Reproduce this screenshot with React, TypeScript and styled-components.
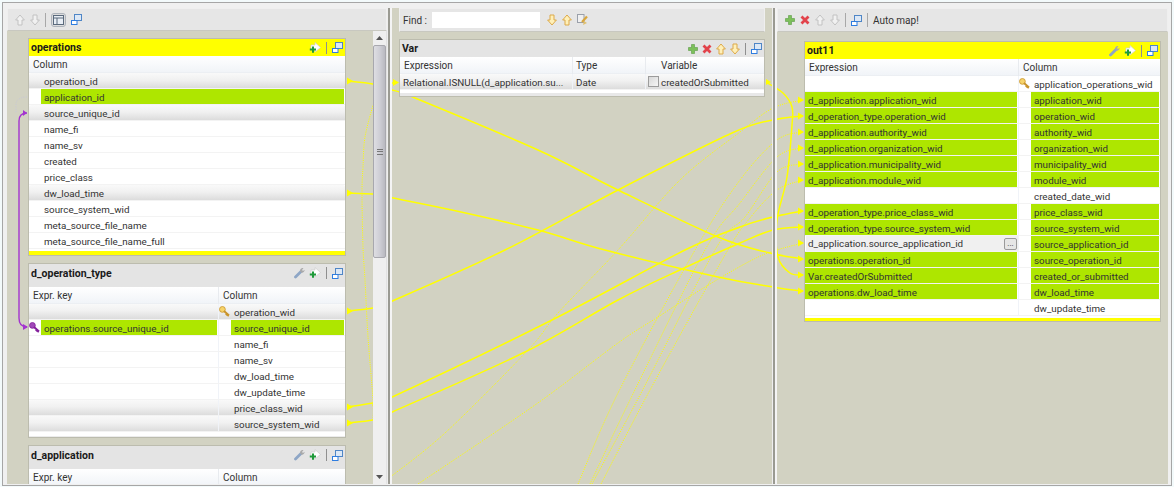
import React from "react";
import styled, { createGlobalStyle } from "styled-components";

const GlobalStyle = createGlobalStyle`
  html, body { margin: 0; padding: 0; background: #f3fafb; overflow: hidden; }
  * { box-sizing: border-box; }
  body { font-family: Roboto, "Open Sans", "Liberation Sans", sans-serif; font-size: 10px; color: #333; }
`;

const CANVAS = "#d2d2c2";
const GREEN = "#aee600";

const Frame = styled.div`
  display: flex;
  width: 1170px;
  height: 484px;
  margin: 2px 0 0 2px;
  padding: 5px 2px 1px 4px;
  background: #f0f0f0;
  border: 1px solid #a6a6a6;
`;
const LeftPanel = styled.section`
  width: 380px;
  display: flex;
  flex-direction: column;
`;
const CenterPanel = styled.section`
  position: relative;
  width: 380px;
  padding: 0 7px;
  background: ${CANVAS};
  overflow: hidden;
`;
const RightPanel = styled.section`
  position: relative;
  width: 391px;
  background: ${CANVAS};
  overflow: hidden;
`;
const Sash = styled.div`
  width: 5px;
  background: linear-gradient(90deg, #eee 0 1px, #9a9a92 1px 3px, #f4f4f4 3px 5px);
`;
const Toolbar = styled.div<{ $h?: number; $pad?: number }>`
  position: relative;
  z-index: 1;
  display: flex;
  align-items: center;
  height: ${(p) => p.$h ?? 24}px;
  padding-left: ${(p) => p.$pad ?? 7}px;
  background: #e6e6e6;
  border: 1px solid #efefef;
  border-bottom-color: #c8c8c0;
  gap: 5px;
`;
const ToolSep = styled.span`
  width: 1px;
  height: 14px;
  background: #a8a8a8;
`;
const Pressed = styled.span`
  display: flex;
  align-items: center;
  justify-content: center;
  width: 15px;
  height: 14px;
  border: 1px solid #aeb4bc;
  border-radius: 3px;
  background: #dcdcdc;
`;
const ToolLabel = styled.span`
  margin-top: 2px;
  font-size: 10px;
  line-height: 16px;
`;
const FindInput = styled.input`
  width: 108px;
  height: 16px;
  margin: 0 2px 0 0;
  border: 0;
  background: #fff;
`;
const LeftBody = styled.div`
  flex: 1;
  display: flex;
  min-height: 0;
`;
const ScrollArea = styled.div`
  position: relative;
  width: 366px;
  padding: 7px 0 0 21px;
  background: ${CANVAS};
  overflow: hidden;
  display: flex;
  flex-direction: column;
  gap: 7px;
`;
const Scrollbar = styled.div`
  width: 14px;
  display: flex;
  flex-direction: column;
  align-items: center;
  background: #efefef;
  border-right: 1px solid #e2e2e2;
`;
const ScrollArrow = styled.span`
  height: 14px;
  display: flex;
  align-items: center;
  justify-content: center;
`;
const Thumb = styled.div`
  width: 13px;
  height: 213px;
  display: flex;
  align-items: center;
  justify-content: center;
  background: linear-gradient(90deg, #dedee2, #cfcfd6 50%, #b9b9c0);
  border: 1px solid #a8a8ae;
  border-radius: 2px;
`;
const ScrollSpacer = styled.div`
  flex: 1;
`;
const Grip = styled.span`
  width: 6px;
  height: 6px;
  border-top: 1px solid #777;
  border-bottom: 1px solid #777;
  background: linear-gradient(#777, #777) center / 100% 1px no-repeat;
`;
const Card = styled.div<{ $w: number; $mt?: number; $ml?: number }>`
  position: relative;
  z-index: 1;
  flex: none;
  width: ${(p) => p.$w}px;
  margin-top: ${(p) => p.$mt ?? 0}px;
  margin-left: ${(p) => p.$ml ?? 0}px;
  background: #fff;
  border: 1px solid #bcbcae;
`;
const CardHead = styled.div<{ $active?: boolean; $tall?: boolean }>`
  display: flex;
  align-items: center;
  height: ${(p) => (p.$tall ? 23 : 17)}px;
  padding: ${(p) => (p.$tall ? "0 0 5px 2px" : "0 0 0 2px")};
  background: ${(p) => (p.$active ? "#ffff00" : "#e4e4e4")};
`;
const CardTitle = styled.span`
  flex: 1;
  font-size: 10.5px;
  font-weight: 700;
  color: #1a1a1a;
`;
const Actions = styled.span`
  display: flex;
  align-items: center;
  gap: 4px;
  padding-right: 2px;
`;
const HeadSep = styled.span`
  width: 1px;
  height: 12px;
  margin: 0 1px;
  background: #8f8f8f;
`;
const ColHeader = styled.div<{ $cols: string }>`
  display: grid;
  grid-template-columns: ${(p) => p.$cols};
  height: 17px;
  background: linear-gradient(#fff, #f1f4f8);
  border-bottom: 1px solid #eceff3;
`;
const ColName = styled.span<{ $pad?: number }>`
  padding-left: ${(p) => p.$pad ?? 4}px;
  line-height: 18px;
  font-size: 10px;
  border-right: 1px solid #e8ebef;
  &:last-child { border-right: 0; }
`;
const Row = styled.div<{ $cols: string; $linked?: boolean }>`
  display: grid;
  grid-template-columns: ${(p) => p.$cols};
  height: 16px;
  padding-right: 1px;
  background: ${(p) =>
    p.$linked ? "linear-gradient(#f9f9f9 0, #f1f1f1 45%, #dcdcdc 100%)" : "#fff"};
  border-bottom: 1px solid #f3f3f3;
  ${(p) => p.$linked && "border-radius: 2px 2px 0 0;"}
`;
const Cell = styled.div`
  position: relative;
  display: flex;
  min-width: 0;
  height: 15px;
  border-right: 1px solid #f0f3f8;
  &:last-child { border-right: 0; }
`;
const Slot = styled.span<{ $w?: number }>`
  flex: none;
  display: flex;
  align-items: center;
  width: ${(p) => p.$w ?? 12}px;
`;
const Value = styled.span<{ $green?: boolean; $gapRight?: number }>`
  flex: 1;
  min-width: 0;
  margin-right: ${(p) => p.$gapRight ?? 0}px;
  padding-left: 3px;
  line-height: 17px;
  font-size: 9.8px;
  white-space: nowrap;
  overflow: hidden;
  background: ${(p) => (p.$green ? GREEN : "transparent")};
`;
const Editor = styled.span`
  flex: 1;
  display: flex;
  align-items: center;
  justify-content: space-between;
  margin-left: 1px;
  padding: 0 1px 0 2px;
  font-size: 9.8px;
  background: #f0f0f0;
`;
const DotsButton = styled.span`
  width: 13px;
  height: 12px;
  line-height: 9px;
  text-align: center;
  font-size: 8px;
  background: #e6e6e6;
  border: 1px solid #9a9a9a;
  border-radius: 2px;
`;
const Check = styled.span`
  width: 11px;
  height: 11px;
  margin: 2px -1px 0 2px;
  border: 1px solid #9c9c9c;
  background: linear-gradient(135deg, #d8d8d8, #f6f6f6);
`;
const CardFoot = styled.div<{ $h: number; $strip?: string; $stripH?: number }>`
  height: ${(p) => p.$h}px;
  background: linear-gradient(
    transparent calc(100% - ${(p) => p.$stripH ?? 0}px),
    ${(p) => p.$strip ?? "transparent"} 0
  );
`;
const Wrap = styled.svg`
  position: absolute;
  left: 0;
  top: 0;
  pointer-events: none;
`;

/* ---------- icons ---------- */
const Arrow = ({ dir, color, stroke }: { dir: "up" | "down"; color: string; stroke: string }) => (
  <svg width="10" height="12" viewBox="0 0 10 12" style={{ transform: dir === "down" ? "scaleY(-1)" : undefined }}>
    <path d="M5 1 L9.4 6 H7 V11 H3 V6 H.6 Z" fill={color} stroke={stroke} strokeWidth="1" strokeLinejoin="round" />
  </svg>
);
const GrayUp = () => <Arrow dir="up" color="#f1f1f1" stroke="#c2c2c2" />;
const GrayDown = () => <Arrow dir="down" color="#f1f1f1" stroke="#c2c2c2" />;
const GoldUp = () => <Arrow dir="up" color="#fff0b8" stroke="#dca94a" />;
const GoldDown = () => <Arrow dir="down" color="#fff0b8" stroke="#dca94a" />;
const Win = () => (
  <svg width="11" height="11" viewBox="0 0 11 11">
    <rect x="3.5" y=".5" width="7" height="6" fill="#dce8f6" stroke="#4f86c6" />
    <rect x=".5" y="6.5" width="5.5" height="4" fill="#fff" stroke="#2f7de0" />
  </svg>
);
const TableIco = () => (
  <svg width="11" height="10" viewBox="0 0 11 10">
    <rect x=".5" y=".5" width="10" height="9" fill="#e8eef5" stroke="#5a6a7c" />
    <path d="M.5 3 H10.5 M4 3 V9.5" stroke="#5a6a7c" />
  </svg>
);
const Plus = () => (
  <svg width="10" height="10" viewBox="0 0 10 10">
    <path d="M3.5 .5 H6.5 V3.5 H9.5 V6.5 H6.5 V9.5 H3.5 V6.5 H.5 V3.5 H3.5 Z" fill="#7cc05a" stroke="#5b9a44" strokeWidth=".6" />
  </svg>
);
const Cross = () => (
  <svg width="10" height="10" viewBox="0 0 10 10">
    <path d="M1.5 1.5 L8.5 8.5 M8.5 1.5 L1.5 8.5" stroke="#e2434b" strokeWidth="2.8" />
  </svg>
);
const Wrench = () => (
  <svg width="11" height="12" viewBox="0 0 11 11">
    <path d="M1.5 9.5 L7 4" stroke="#8ea6c6" strokeWidth="2.8" strokeLinecap="round" />
    <path d="M6.2 3.8 A2.6 2.6 0 0 1 9.5 .6 L8 2.4 L9 3.6 L10.6 2.2 A2.6 2.6 0 0 1 7.2 5 Z" fill="#a9a9a9" />
  </svg>
);
const AddArrow = () => (
  <svg width="12" height="12" viewBox="0 0 12 12">
    <path d="M6 .5 L11.5 5.5 L6 10 V7.5 H2 V3 H6 Z" fill="#fff" stroke="#cfcfcf" strokeWidth=".7" />
    <path d="M3 4.5 H5 V6.5 H7 V8.5 H5 V10.8 H3 V8.5 H.8 V6.5 H3 Z" fill="#1f9a3a" />
  </svg>
);
const Key = ({ color, edge }: { color: string; edge: string }) => (
  <svg width="11" height="11" viewBox="0 0 11 11">
    <circle cx="3.4" cy="3.4" r="2.9" fill={color} stroke={edge} strokeWidth=".8" />
    <path d="M5 5 L10 9.6 M8 7.8 L6.8 9 M9.4 9 L8.4 10.2" stroke={edge} strokeWidth="2" />
  </svg>
);
const GoldKey = () => <Key color="#f6d36a" edge="#c9942c" />;
const PurpleKey = () => <Key color="#a048b8" edge="#84209c" />;
const FindOpts = () => (
  <svg width="12" height="12" viewBox="0 0 12 12">
    <rect x=".5" y=".5" width="6.5" height="8" fill="#f0f0f0" stroke="#9aa0aa" />
    <path d="M5 8 L10 2.5" stroke="#d9a63c" strokeWidth="2.2" />
    <path d="M6 11 L7 7 L10 9 Z" fill="#e0c070" />
  </svg>
);
const TinyTri = ({ down }: { down?: boolean }) => (
  <svg width="7" height="4" viewBox="0 0 7 4">
    <path d={down ? "M0 0 H7 L3.5 4 Z" : "M0 4 H7 L3.5 0 Z"} fill="#555" />
  </svg>
);

/* ---------- connection wires (page coordinates) ---------- */
type P = [number, number];
const smooth = (pts: P[]) => {
  let d = `M${pts[0][0]} ${pts[0][1]}`;
  for (let i = 0; i < pts.length - 1; i++) {
    const a = pts[Math.max(i - 1, 0)];
    const b = pts[i];
    const c = pts[i + 1];
    const e = pts[Math.min(i + 2, pts.length - 1)];
    d += ` C${b[0] + (c[0] - a[0]) / 6} ${b[1] + (c[1] - a[1]) / 6} ${c[0] - (e[0] - b[0]) / 6} ${c[1] - (e[1] - b[1]) / 6} ${c[0]} ${c[1]}`;
  }
  return d;
};
const solid: P[][] = [
  [[347, 81], [373, 84], [392, 90], [415, 98], [538, 150], [618, 190], [718, 237], [770, 253], [803, 259]],
  [[347, 193], [373, 194], [388, 197], [452, 210], [538, 230], [605, 250], [718, 277], [773, 287], [803, 291]],
  [[347, 407], [373, 403], [390, 398], [552, 320], [685, 250], [740, 227], [773, 217], [803, 211]],
  [[347, 423], [373, 420], [390, 413], [525, 352], [618, 300], [682, 269], [740, 243], [773, 230], [803, 227]],
  [[347, 311], [373, 308], [390, 302], [505, 250], [618, 190], [732, 133], [773, 120], [803, 116]],
  [[766, 82], [783, 93], [792, 107], [792, 125], [787, 177], [777, 220], [778, 257], [790, 273], [803, 275]],
  [[390, 83], [396, 83]],
];
const dotted: P[][] = [
  [[373, 420], [373, 400], [368, 337], [365, 280], [363, 247], [362, 193], [363, 167], [365, 137], [373, 105]],
  [[385, 481], [445, 433], [528, 350], [558, 313], [618, 250], [680, 180], [740, 132], [773, 108], [803, 100]],
  [[418, 484], [535, 405], [618, 343], [658, 317], [705, 287], [752, 260], [777, 250], [803, 243]],
  [[578, 484], [618, 393], [695, 250], [740, 180], [777, 140], [803, 132]],
  [[590, 484], [630, 400], [705, 250], [740, 203], [777, 157], [803, 148]],
  [[592, 484], [640, 395], [715, 250], [745, 217], [777, 172], [803, 164]],
  [[601, 484], [650, 390], [725, 255], [750, 218], [777, 190], [803, 180]],
];
const sources = [81, 193, 311, 407, 423];
const targets = [100, 116, 132, 148, 164, 180, 211, 227, 243, 259, 275, 291];

const Wires = ({ x, y, w, h }: { x: number; y: number; w: number; h: number }) => (
  <Wrap width={w} height={h} viewBox={`${x} ${y} ${w} ${h}`}>
    {solid.map((p, i) => (
      <path key={i} d={smooth(p)} fill="none" stroke="#ffff00" strokeWidth="1.5" />
    ))}
    {dotted.map((p, i) => (
      <path key={i} d={smooth(p)} fill="none" stroke="#ffff00" strokeWidth="1" strokeDasharray="1 1.2" />
    ))}
    {sources.map((t) => (
      <polygon key={t} points={`347,${t - 3.5} 353,${t} 347,${t + 3.5}`} fill="#ffff00" />
    ))}
    <polygon points="393,79 399,82.5 393,86" fill="#ffff00" />
    <polygon points="766,79 771,82 766,85" fill="#ffff00" />
    {targets.map((t) => (
      <polygon key={t} points={`798,${t - 3.5} 804,${t} 798,${t + 3.5}`} fill="#ffff00" />
    ))}
    <path d="M27 113 Q19 113 19 121 V318 Q19 327 27 327" fill="none" stroke="#a334cf" strokeWidth="1.4" />
    <polygon points="23,110 27,113 23,116" fill="#a334cf" />
    <polygon points="23,324 28,327 23,330" fill="#a334cf" />
    <path d="M27 97 Q16 97 16 105 V113" fill="none" stroke="#c8c8d8" strokeWidth="1" strokeDasharray="1 1.4" />
  </Wrap>
);

/* ---------- data ---------- */
const ONE = "1fr";
const TWO = "190px 1fr";
const OUT = "214px 1fr";
const VAR = "173px 73px 1fr";

const opRows: [string, boolean, boolean][] = [
  ["operation_id", true, false],
  ["application_id", false, true],
  ["source_unique_id", true, false],
  ["name_fi", false, false],
  ["name_sv", false, false],
  ["created", false, false],
  ["price_class", false, false],
  ["dw_load_time", true, false],
  ["source_system_wid", false, false],
  ["meta_source_file_name", false, false],
  ["meta_source_file_name_full", false, false],
];
const typeRows: { col: string; linked?: boolean; gold?: boolean; expr?: string }[] = [
  { col: "operation_wid", linked: true, gold: true },
  { col: "source_unique_id", expr: "operations.source_unique_id" },
  { col: "name_fi" },
  { col: "name_sv" },
  { col: "dw_load_time" },
  { col: "dw_update_time" },
  { col: "price_class_wid", linked: true },
  { col: "source_system_wid", linked: true },
];
const outRows: { expr?: string; col: string; gold?: boolean; editing?: boolean }[] = [
  { col: "application_operations_wid", gold: true },
  { expr: "d_application.application_wid", col: "application_wid" },
  { expr: "d_operation_type.operation_wid", col: "operation_wid" },
  { expr: "d_application.authority_wid", col: "authority_wid" },
  { expr: "d_application.organization_wid", col: "organization_wid" },
  { expr: "d_application.municipality_wid", col: "municipality_wid" },
  { expr: "d_application.module_wid", col: "module_wid" },
  { col: "created_date_wid" },
  { expr: "d_operation_type.price_class_wid", col: "price_class_wid" },
  { expr: "d_operation_type.source_system_wid", col: "source_system_wid" },
  { expr: "d_application.source_application_id", col: "source_application_id", editing: true },
  { expr: "operations.operation_id", col: "source_operation_id" },
  { expr: "Var.createdOrSubmitted", col: "created_or_submitted" },
  { expr: "operations.dw_load_time", col: "dw_load_time" },
  { col: "dw_update_time" },
];

const LookupActions = () => (
  <Actions>
    <Wrench />
    <AddArrow />
    <HeadSep />
    <Win />
  </Actions>
);

export default function App() {
  return (
    <>
      <GlobalStyle />
      <Frame>
        <LeftPanel>
          <Toolbar $h={23}>
            <GrayUp />
            <GrayDown />
            <ToolSep />
            <Pressed>
              <TableIco />
            </Pressed>
            <Win />
          </Toolbar>
          <LeftBody>
            <ScrollArea>
              <Wires x={7} y={31} w={366} h={453} />
              <Card $w={318}>
                <CardHead $active>
                  <CardTitle>operations</CardTitle>
                  <Actions>
                    <AddArrow />
                    <HeadSep />
                    <Win />
                  </Actions>
                </CardHead>
                <ColHeader $cols={ONE}>
                  <ColName>Column</ColName>
                </ColHeader>
                {opRows.map(([name, linked, green]) => (
                  <Row key={name} $cols={ONE} $linked={linked}>
                    <Cell>
                      <Slot />
                      <Value $green={green}>{name}</Value>
                    </Cell>
                  </Row>
                ))}
                <CardFoot $h={6} $strip="#ffff00" $stripH={4} />
              </Card>
              <Card $w={318}>
                <CardHead $tall>
                  <CardTitle>d_operation_type</CardTitle>
                  <LookupActions />
                </CardHead>
                <ColHeader $cols={TWO}>
                  <ColName>Expr. key</ColName>
                  <ColName>Column</ColName>
                </ColHeader>
                {typeRows.map((r) => (
                  <Row key={r.col} $cols={TWO} $linked={r.linked}>
                    <Cell>
                      <Slot>{r.expr && <PurpleKey />}</Slot>
                      <Value $green={!!r.expr} $gapRight={1}>
                        {r.expr}
                      </Value>
                    </Cell>
                    <Cell>
                      <Slot>{r.gold && <GoldKey />}</Slot>
                      <Value $green={!!r.expr}>{r.col}</Value>
                    </Cell>
                  </Row>
                ))}
                <CardFoot $h={5} $strip="#ececec" $stripH={1} />
              </Card>
              <Card $w={318}>
                <CardHead $tall>
                  <CardTitle>d_application</CardTitle>
                  <LookupActions />
                </CardHead>
                <ColHeader $cols={TWO}>
                  <ColName>Expr. key</ColName>
                  <ColName>Column</ColName>
                </ColHeader>
              </Card>
            </ScrollArea>
            <Scrollbar>
              <ScrollArrow>
                <TinyTri />
              </ScrollArrow>
              <Thumb>
                <Grip />
              </Thumb>
              <ScrollSpacer />
              <ScrollArrow>
                <TinyTri down />
              </ScrollArrow>
            </Scrollbar>
          </LeftBody>
        </LeftPanel>
        <Sash />
        <CenterPanel>
          <Wires x={392} y={8} w={380} h={477} />
          <Toolbar $pad={3}>
            <ToolLabel>Find :</ToolLabel>
            <FindInput aria-label="Find" />
            <GoldDown />
            <GoldUp />
            <FindOpts />
          </Toolbar>
          <Card $w={366} $mt={7}>
            <CardHead>
              <CardTitle>Var</CardTitle>
              <Actions>
                <Plus />
                <Cross />
                <GoldUp />
                <GoldDown />
                <HeadSep />
                <Win />
              </Actions>
            </CardHead>
            <ColHeader $cols={VAR}>
              <ColName>Expression</ColName>
              <ColName $pad={3}>Type</ColName>
              <ColName $pad={15}>Variable</ColName>
            </ColHeader>
            <Row $cols={VAR} $linked>
              <Cell>
                <Value>Relational.ISNULL(d_application.su...</Value>
              </Cell>
              <Cell>
                <Value>Date</Value>
              </Cell>
              <Cell>
                <Check />
                <Value>createdOrSubmitted</Value>
              </Cell>
            </Row>
            <CardFoot $h={6} $strip="#e8e8e8" $stripH={3} />
          </Card>
        </CenterPanel>
        <Sash />
        <RightPanel>
          <Wires x={777} y={8} w={391} h={477} />
          <Toolbar>
            <Plus />
            <Cross />
            <GrayUp />
            <GrayDown />
            <ToolSep />
            <Win />
            <ToolSep />
            <ToolLabel>Auto map!</ToolLabel>
          </Toolbar>
          <Card $w={357} $mt={9} $ml={27}>
            <CardHead $active>
              <CardTitle>out11</CardTitle>
              <LookupActions />
            </CardHead>
            <ColHeader $cols={OUT}>
              <ColName>Expression</ColName>
              <ColName>Column</ColName>
            </ColHeader>
            {outRows.map((r) => (
              <Row key={r.col} $cols={OUT}>
                <Cell>
                  {r.editing ? (
                    <Editor>
                      {r.expr}
                      <DotsButton>...</DotsButton>
                    </Editor>
                  ) : (
                    <Value $green={!!r.expr} $gapRight={1}>
                      {r.expr}
                    </Value>
                  )}
                </Cell>
                <Cell>
                  <Slot>{r.gold && <GoldKey />}</Slot>
                  <Value $green={!!r.expr}>{r.col}</Value>
                </Cell>
              </Row>
            ))}
            <CardFoot $h={5} $strip="#ffff00" $stripH={3} />
          </Card>
        </RightPanel>
      </Frame>
    </>
  );
}
